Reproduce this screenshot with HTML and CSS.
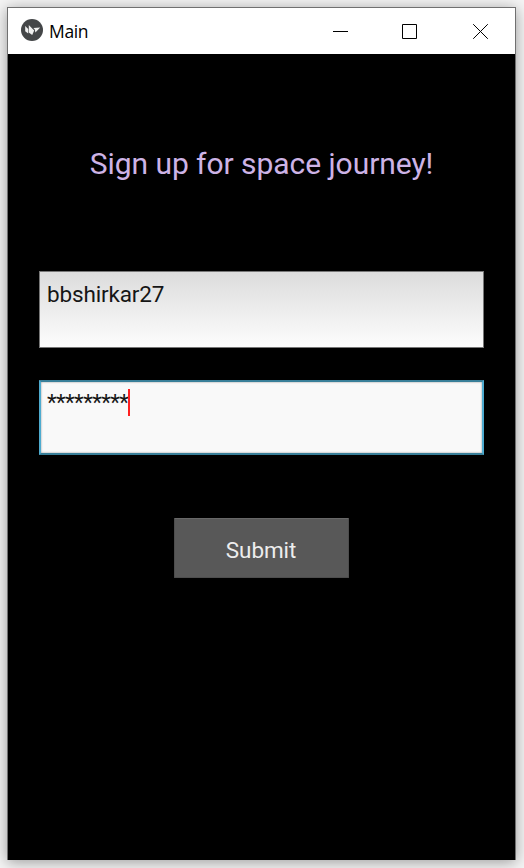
FILE: index.html
```html
<!DOCTYPE html>
<html lang="en">
<head>
<meta charset="utf-8">
<title>Main</title>
<link rel="stylesheet" href="styles.css">
</head>
<body>
<main class="window">
  <header class="titlebar">
    <svg class="logo" width="22" height="22" viewBox="0 0 22 22">
      <circle cx="11" cy="11" r="11" fill="#444648"/>
      <path d="M4.2 7 7.2 10 7.2 14.6 4.2 12.2ZM7.8 6 13.2 11.4 11.2 16 7.8 13.4ZM12.4 9 19.2 8.4 14.4 13.6 13.8 10.6Z" fill="#f0f0f0"/>
    </svg>
    <span class="caption">Main</span>
    <div class="controls">
      <svg width="15" height="15" viewBox="0 0 15 15"><path d="M0 7.5H15"/></svg>
      <svg width="15" height="15" viewBox="0 0 15 15"><path d="M.5.5h14v14H.5Z"/></svg>
      <svg width="15" height="15" viewBox="0 0 15 15"><path d="M.2.2 14.8 14.8M14.8.2.2 14.8"/></svg>
    </div>
  </header>
  <section class="content">
    <h1 class="heading">Sign up for space journey!</h1>
    <div class="field">bbshirkar27</div>
    <div class="field field-focused"><span class="mask">*********</span><span class="caret"></span></div>
    <button class="submit">Submit</button>
  </section>
</main>
</body>
</html>
```

FILE: styles.css
```css
* { box-sizing: border-box; }
body {
  margin: 0;
  height: 868px;
  padding: 7px 8px 8px 7px;
  background: #f5f5f5;
  overflow: hidden;
  font-family: Roboto, sans-serif;
}
.window {
  height: 853px;
  border: 1px solid #707070;
  border-bottom: 0;
  background: #000;
  box-shadow: 0 2px 14px rgba(0, 0, 0, .38);
}
.titlebar {
  display: flex;
  align-items: center;
  height: 46px;
  padding: 0 27px 0 13px;
  background: #fff;
}
.logo { margin-top: -2px; }
.caption {
  margin-left: 6px;
  font: 17.5px/24px "Open Sans", sans-serif;
  letter-spacing: -.35px;
  color: #000;
}
.controls {
  display: flex;
  gap: 54px;
  margin-left: auto;
}
.controls svg { fill: none; stroke: #000; stroke-width: 1; }
.controls svg:last-child { margin-left: 2px; }
.content {
  display: flex;
  flex-direction: column;
  align-items: center;
  padding: 90px 31px 0;
}
.heading {
  margin: 0 0 87px;
  font-size: 30px;
  font-weight: 400;
  line-height: 40px;
  letter-spacing: -.05px;
  white-space: nowrap;
  color: #cdb3e6;
}
.field {
  width: 445px;
  height: 77px;
  padding: 8px 7px;
  border: 1px solid #777;
  background: linear-gradient(#dcdcdc, #fdfdfd);
  font-size: 22.5px;
  line-height: 28px;
  letter-spacing: -.15px;
  color: #161616;
}
.field-focused {
  display: flex;
  height: 75px;
  margin-top: 32px;
  padding: 7px 6px;
  border: 2px solid #4eabcf;
  border-block-color: #397f99;
  background: #f9f9f9;
  box-shadow: inset 0 0 2px #888;
}
.mask {
  margin-top: -1px;
  letter-spacing: -.65px;
}
.caret {
  width: 2px;
  height: 27px;
  background: #ff2020;
}
.submit {
  width: 175px;
  height: 60px;
  margin-top: 63px;
  padding: 4px 1px 0 0;
  border: 1px solid #4d4d4d;
  border-top-color: #686868;
  border-radius: 1px;
  background: #585858;
  font: 22.5px/28px Roboto, sans-serif;
  letter-spacing: -.1px;
  color: #ededed;
}
```
